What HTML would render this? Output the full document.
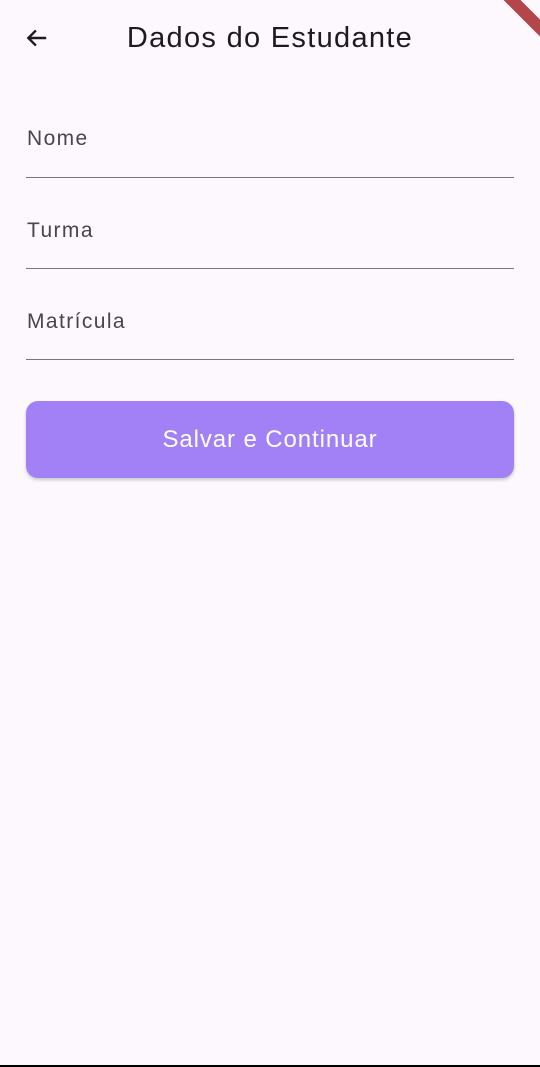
<!DOCTYPE html>
<html><head><meta charset="utf-8"><style>
html,body{margin:0;padding:0}
body{width:540px;height:1067px;background:#fdf7fe;position:relative;overflow:hidden;font-family:"Liberation Sans",sans-serif;color:#1d1b20}
.title{position:absolute;left:0;width:540px;top:22px;text-align:center;font-size:29px;letter-spacing:1.3px;color:#1d1b20}
.back{position:absolute;left:24px;top:25px}
.field{position:absolute;left:26px;width:488px;border-bottom:1.3px solid #79747e;height:0}
.lbl{position:absolute;left:27px;font-size:21px;color:#49454f;letter-spacing:1.4px}
.btn{position:absolute;left:26px;top:401px;width:488px;height:77px;border-radius:12px;background:#a281f6;box-shadow:0 2px 3px rgba(0,0,0,0.2);color:#fff;font-size:24px;letter-spacing:0.9px;text-align:center;line-height:78px}
.bottom{position:absolute;left:0;bottom:0;width:540px;height:2px;background:#000}
.ribbon{position:absolute;left:493px;top:10px;width:70px;height:12px;background:#b3464a;transform:rotate(45deg);transform-origin:center}
</style></head><body>
<div class="ribbon"></div>
<svg class="back" width="26" height="26" viewBox="0 0 24 24"><path d="M20.5 12H4M11 5l-7 7 7 7" fill="none" stroke="#1d1b20" stroke-width="2.2"/></svg>
<div class="title">Dados do Estudante</div>
<div class="lbl" style="top:127px">Nome</div>
<div class="field" style="top:177px"></div>
<div class="lbl" style="top:219px">Turma</div>
<div class="field" style="top:268px"></div>
<div class="lbl" style="top:310px">Matrícula</div>
<div class="field" style="top:359px"></div>
<div class="btn">Salvar e Continuar</div>
<div class="bottom"></div>
</body></html>
